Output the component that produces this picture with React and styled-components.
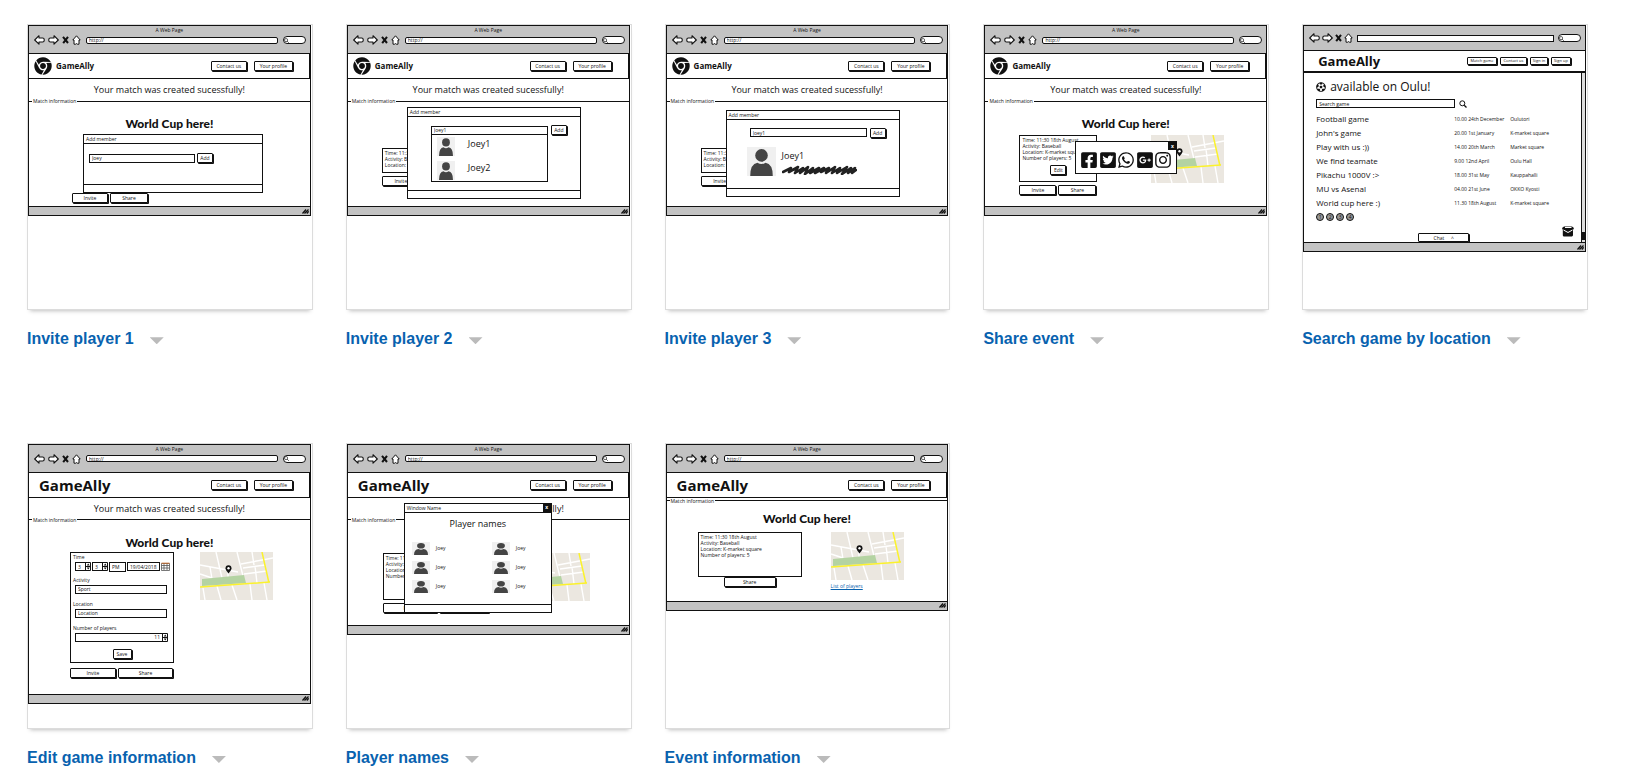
import React from "react";
import styled, { createGlobalStyle, css } from "styled-components";
import {
  FaChrome,
  FaFacebookSquare,
  FaTwitterSquare,
  FaWhatsapp,
  FaGooglePlusSquare,
  FaInstagram,
  FaFutbol,
} from "react-icons/fa";

const INK = "#111";

const GlobalStyle = createGlobalStyle`
  *, *::before, *::after { box-sizing: border-box; }
  body {
    margin: 0;
    background: #fff;
    font-family: "Liberation Sans", Arial, sans-serif;
  }
`;

/* ---------- gallery ---------- */

const Gallery = styled.main`
  display: grid;
  grid-template-columns: repeat(5, minmax(0, 1fr));
  gap: 77px 33px;
  padding: 24px 62px 0 27px;
`;

const Tile = styled.article`
  min-width: 0;
`;

const Thumb = styled.div`
  aspect-ratio: 1;
  padding-right: 1px;
  border: 1px solid #dcdcdc;
  background: #fff;
  box-shadow: 0 4px 4px -3px rgba(0, 0, 0, 0.25);
  overflow: hidden;
`;

const Caption = styled.div`
  display: flex;
  align-items: center;
  gap: 16px;
  height: 56px;
  padding-top: 2px;
`;

const TitleLink = styled.a`
  color: #0862af;
  font-size: 16px;
  font-weight: bold;
  line-height: 20px;
  text-decoration: none;
  white-space: nowrap;
`;

const MenuButton = styled.button`
  width: 14px;
  height: 7px;
  margin-top: 4px;
  padding: 0;
  border: 0;
  background: #bbb;
  clip-path: polygon(0 0, 100% 0, 50% 100%);
`;

/* ---------- wireframe browser ---------- */

const Frame = styled.div`
  position: relative;
  display: flex;
  flex-direction: column;
  border: 1px solid ${INK};
  background: #fff;
  color: ${INK};
  font-family: "Open Sans", "Noto Sans", sans-serif;
  font-size: 5px;
  line-height: 6px;
  white-space: nowrap;
`;

const Bar = styled.div`
  height: ${(p) => (p.$short ? 25 : 28)}px;
  padding-top: 1px;
  border-bottom: 1px solid ${INK};
  background: #c3c3c3;
`;

const BarTitle = styled.div`
  height: ${(p) => (p.$short ? 4 : 6)}px;
  text-align: center;
`;

const NavRow = styled.div`
  display: flex;
  align-items: center;
  gap: ${(p) => (p.$short ? 2 : 3)}px;
  height: 14px;
  padding: 0 4px 0 5px;
  svg { flex: none; display: block; }
`;

const field = css`
  min-width: 0;
  padding: 0 2px;
  border: 1px solid ${INK};
  border-radius: 0;
  background: #fff;
  color: ${INK};
  font: inherit;
  outline: 0;
`;

const UrlField = styled.input`
  ${field}
  flex: 1;
  height: 7px;
  margin-left: 2px;
  border-radius: ${(p) => (p.$square ? 0 : 2)}px;
`;

const SearchPill = styled.div`
  display: flex;
  align-items: center;
  width: 23px;
  height: 8px;
  margin-left: 2px;
  border: 1px solid ${INK};
  border-radius: 4px;
  background: #fff;
`;

const Head = styled.header`
  display: flex;
  align-items: center;
  gap: ${(p) => p.$gap || 7}px;
  height: ${(p) => (p.$short ? 22 : 25)}px;
  padding: 0 ${(p) => (p.$short ? 14 : 16)}px 0 ${(p) => p.$left}px;
  border-right: ${(p) => (p.$short ? 0 : 1)}px solid ${INK};
  border-bottom: ${(p) => (p.$short ? 2 : 1)}px solid ${INK};
  font-size: ${(p) => (p.$short ? 4 : 5)}px;
  svg { margin-right: -3px; }
`;

const Brand = styled.span`
  flex: 1;
  font-size: ${(p) => p.$size}px;
  font-weight: bold;
  line-height: 18px;
`;

const Key = styled.button`
  flex: none;
  width: ${(p) => p.$w}px;
  height: ${(p) => p.$h || 10}px;
  padding: 0;
  border: 1px solid ${INK};
  border-radius: 1px;
  box-shadow: 1px 1px 0 ${INK};
  background: #fff;
  color: ${INK};
  font: inherit;
  line-height: 6px;
`;

const Notice = styled.p`
  height: 19px;
  margin: 0;
  font-size: 9px;
  line-height: 21px;
  text-align: center;
`;

const Legend = styled.div`
  display: flex;
  align-items: center;
  gap: 1px;
  height: 6px;
  &::before, &::after { content: ""; height: 1px; background: ${INK}; }
  &::before { width: 3px; }
  &::after { flex: 1; }
`;

const Main = styled.section`
  min-height: ${(p) => p.$h}px;
  padding-top: ${(p) => (p.$top === undefined ? 12 : p.$top)}px;
`;

const Heading = styled.h2`
  margin: 0;
  font-family: Lato, "Open Sans", sans-serif;
  font-size: 12px;
  font-weight: 900;
  line-height: 16px;
  text-align: center;
`;

const Foot = styled.div`
  display: flex;
  align-items: center;
  justify-content: flex-end;
  height: 9px;
  padding-right: 1px;
  border-top: 1px solid ${INK};
  background: #c3c3c3;
`;

const Columns = styled.div`
  display: flex;
  align-items: flex-start;
  gap: ${(p) => p.$gap}px;
  padding: ${(p) => p.$top}px 0 0 ${(p) => p.$left}px;
`;

const Side = styled.div`
  width: ${(p) => p.$w}px;
`;

const Keys = styled.div`
  display: flex;
  justify-content: ${(p) => (p.$center ? "center" : "flex-start")};
  gap: 2px;
  margin-top: ${(p) => p.$top}px;
  padding-left: ${(p) => p.$left || 0}px;
`;

const Info = styled.div`
  display: flex;
  flex-direction: column;
  height: ${(p) => p.$h}px;
  padding: 1px 2px;
  border: 1px solid ${INK};
  overflow: hidden;
  button { align-self: center; margin-top: 4px; }
`;

const Panel = styled.div`
  display: flex;
  flex-direction: column;
  width: ${(p) => p.$w}px;
  height: ${(p) => p.$h}px;
  margin: 2px 0 0 54px;
  border: 1px solid ${INK};
  background: #fff;
`;

const Popup = styled(Panel)`
  position: absolute;
  top: ${(p) => p.$y}px;
  left: ${(p) => p.$x}px;
  margin: 0;
`;

const PanelTitle = styled.div`
  display: flex;
  justify-content: space-between;
  height: 9px;
  padding-left: 2px;
  border-bottom: ${(p) => (p.$plain ? 0 : 1)}px solid ${INK};
  line-height: 8px;
`;

const PanelBody = styled.div`
  flex: 1;
  padding: ${(p) => p.$pad};
`;

const PanelFoot = styled.div`
  height: 8px;
  border-top: 1px solid ${INK};
`;

const CloseKey = styled.button`
  width: 8px;
  height: 8px;
  margin-left: auto;
  padding: 0;
  border: 0;
  background: ${INK};
  color: #fff;
  font: inherit;
  font-weight: bold;
  line-height: 7px;
`;

const Line = styled.div`
  display: flex;
  align-items: center;
  gap: ${(p) => p.$gap || 3}px;
`;

const Field = styled.input`
  ${field}
  width: ${(p) => p.$w}px;
  height: 9px;
  text-align: ${(p) => p.$align || "left"};
`;

const Picker = styled.select`
  ${field}
  width: 17px;
  height: 10px;
  appearance: none;
`;

const Finder = styled.div`
  position: relative;
  width: 117px;
`;

const Options = styled.ul`
  position: absolute;
  top: 8px;
  left: 0;
  width: 100%;
  height: 48px;
  margin: 0;
  padding: 2px 0 0 5px;
  border: 1px solid ${INK};
  background: #fff;
  list-style: none;
`;

const Option = styled.li`
  display: flex;
  gap: 13px;
  height: 24px;
  font-size: 9px;
  line-height: 14px;
`;

const Result = styled.div`
  display: flex;
  gap: 6px;
  margin: 9px 0 0 20px;
  font-size: 9px;
  line-height: 18px;
  svg { display: block; }
`;

const Social = styled.div`
  display: flex;
  justify-content: space-between;
  padding: 0 4px;
`;

const PlayerHeading = styled.h3`
  margin: 0 0 8px;
  font-size: 9px;
  font-weight: normal;
  line-height: 20px;
  text-align: center;
`;

const Players = styled.ul`
  display: grid;
  grid-template-columns: 80px auto;
  row-gap: 6px;
  margin: 0;
  padding: 0 0 0 7px;
  list-style: none;
`;

const Player = styled.li`
  display: flex;
  align-items: center;
  gap: 6px;
`;

const MapLink = styled.a`
  display: block;
  margin-top: 3px;
  color: #0862af;
`;

const Form = styled.form`
  display: flex;
  flex-direction: column;
  width: 104px;
  height: 111px;
  padding: 1px 2px;
  border: 1px solid ${INK};
  button { align-self: center; }
`;

const Labelled = styled.label`
  display: flex;
  flex-direction: column;
  gap: 2px;
  margin-bottom: 7px;
  input { margin-left: 2px; }
`;

const TimeSet = styled.div`
  display: flex;
  align-items: center;
  gap: 1px;
  margin: 2px 0 5px 2px;
`;

const Amount = styled.span`
  display: flex;
  align-items: center;
`;

const Listing = styled.div`
  position: relative;
  height: 169px;
  padding: 5px 0 0 12px;
`;

const ListHeading = styled.h2`
  display: flex;
  align-items: center;
  gap: 4px;
  height: 18px;
  margin: 0 0 3px;
  font-size: 12px;
  font-weight: normal;
  line-height: 18px;
`;

const Games = styled.table`
  width: 250px;
  margin-top: 4px;
  border-collapse: collapse;
  table-layout: fixed;
  td, th { height: 14px; padding: 0; text-align: left; }
  th { width: 138px; font-size: 8px; font-weight: normal; line-height: 10px; }
  td:nth-child(2) { width: 56px; }
`;

const Pages = styled.nav`
  display: flex;
  gap: 2px;
  margin-top: 3px;
`;

const PageKey = styled.a`
  width: 8px;
  height: 8px;
  border: 1px solid ${INK};
  border-radius: 50%;
  background: #999;
  color: ${INK};
  text-align: center;
  text-decoration: none;
  line-height: 6px;
`;

const ChatKey = styled(Key)`
  position: absolute;
  bottom: 0;
  left: 114px;
  z-index: 1;
`;

const Scroll = styled.div`
  position: absolute;
  top: 0;
  right: 0;
  bottom: 0;
  display: flex;
  align-items: flex-end;
  width: 4px;
  border-left: 1px solid ${INK};
  background: #ddd;
  &::after { content: ""; width: 100%; height: 8px; margin-bottom: 2px; background: ${INK}; }
`;

const MailSpot = styled.div`
  position: absolute;
  right: 11px;
  bottom: 4px;
`;

/* ---------- drawings ---------- */

const Arrow = ({ flip }) => (
  <svg width="11" height="10" viewBox="0 0 11 10">
    <path
      d="M5 .7 .7 5 5 9.2V7H8.6Q10.2 7 10.2 5.6V4.4Q10.2 3 8.6 3H5Z"
      transform={flip ? "translate(11 0) scale(-1 1)" : undefined}
      fill="#fff" stroke={INK} strokeWidth="1.1" strokeLinejoin="round"
    />
  </svg>
);

const Stop = () => (
  <svg width="7" height="8" viewBox="0 0 7 8">
    <path d="M1 .8 6 7M6 .8 1.2 7.2" stroke={INK} strokeWidth="2" />
  </svg>
);

const Home = () => (
  <svg width="9" height="10" viewBox="0 0 9 10">
    <path d="M4.5.8.8 5H2V9.2H3.7Q4.5 8 5.3 9.2H7V5H8.2Z" fill="#fff" stroke={INK} strokeLinejoin="round" />
  </svg>
);

const Lens = ({ size }) => (
  <svg width={size} height={size} viewBox="0 0 8 8">
    <circle cx="3.3" cy="3.3" r="2.5" fill="none" stroke={INK} />
    <path d="M5.2 5.2 7.5 7.5" stroke={INK} strokeWidth="1.3" />
  </svg>
);

const Grip = () => (
  <svg width="7" height="5" viewBox="0 0 7 5">
    <path d="M.5 4.5 4 .5M2.5 4.5 6.5.5M4.8 4.5 6.7 2.3" stroke={INK} strokeWidth="1.3" />
  </svg>
);

const Person = ({ w, h }) => (
  <svg width={w} height={h} viewBox="0 0 18 18" preserveAspectRatio="none">
    <path d="M0 0H18V18H0Z" fill="#f0f0f0" />
    <circle cx="9" cy="5.2" r="3.9" fill="#444" />
    <path d="M2 18Q2 10.500 6.500 9.800Q9 11.400 11.500 9.800Q16 10.500 16 18Z" fill="#444" />
  </svg>
);

const Scribble = () => (
  <svg width="75" height="10" viewBox="0 0 75 10">
    <path
      d="M1 7 9 3 7 7 16 2 13 8 21 3 18 8 26 2 23 9 31 3 28 8 37 3 33 8 42 3 39 7 47 3 44 8 53 2 50 8 58 3 55 8 65 2 60 9 69 3 66 8 73 3 70 8 74 5"
      fill="none" stroke="#222" strokeWidth="2.6" strokeLinejoin="round" strokeLinecap="round"
    />
  </svg>
);

const MapSvg = styled.svg`
  display: block;
  flex: none;
`;

const StreetMap = () => (
  <MapSvg width="73" height="48" viewBox="0 0 73 48">
    <path d="M0 0H73V48H0Z" fill="#ebe7e0" />
    <path
      d="M16 0 22 26M37 0 45 32M0 13 38 20M41 12 73 6M43 16 65 13M44 22 67 19M0 22 12 26M10 15 12 27M28 18V26M52 0 54 13M55 14 57 31M17 34 21 48M32 33 37 48M50 32 52 48M64 31 67 48M3 36 5 48"
      fill="none" stroke="#fff" strokeWidth="1.4"
    />
    <path d="M2 27 44 23 46 31 2 34Z" fill="#b4d3a2" />
    <path d="M0 35 70 30M62 0 69 31" fill="none" stroke="#fbf22c" strokeWidth="1.5" />
    <path d="M28.500 21.500Q25.500 18 25.500 16.300A3 3 0 0 1 31.500 16.300Q31.500 18 28.500 21.500Z" fill={INK} />
    <circle cx="28.500" cy="16.300" r="1.200" fill="#fff" />
  </MapSvg>
);

const Stepper = () => (
  <svg width="5" height="9" viewBox="0 0 5 9">
    <path d="M0 .5H4.500V8.500H0M0 4.500H4.500" fill="#fff" stroke={INK} />
    <path d="M.8 3.500H3.700L2.200 1.500ZM.8 5.500H3.700L2.200 7.500Z" fill={INK} />
  </svg>
);

const Calendar = () => (
  <svg width="9" height="9" viewBox="0 0 9 9">
    <path d="M.5 1.500H8.500V8.500H.5ZM.5 3.500H8.500M3 1V8M6 1V8M.5 6H8.500" fill="#fff" stroke="#555" strokeWidth=".8" />
    <path d="M.5 1.200H8.500" stroke="#c66a2b" />
  </svg>
);

const Mail = () => (
  <svg width="12" height="11" viewBox="0 0 12 11">
    <path d="M0 2 2 .5H10L12 2 11 4V9.500L10 10.500H1.500L.8 9.500V4Z" fill={INK} />
    <path d="M1.500 4 6 6.500 10.500 4M3 1.500H9.500" fill="none" stroke="#fff" />
  </svg>
);

/* ---------- wireframe parts ---------- */

const Chrome = ({ short }) => (
  <Bar $short={short}>
    <BarTitle $short={short}>{short ? "" : "A Web Page"}</BarTitle>
    <NavRow $short={short}>
      <Arrow />
      <Arrow flip />
      <Stop />
      <Home />
      <UrlField aria-label="Address" $square={short} defaultValue={short ? "" : "http://"} />
      <SearchPill><Lens size={5} /></SearchPill>
    </NavRow>
  </Bar>
);

const Top = ({ logo }) => (
  <Head $left={logo ? 5 : 10}>
    {logo && <FaChrome size={18} color={INK} />}
    <Brand $size={logo ? 8 : 15}>GameAlly</Brand>
    <Key $w={36}>Contact us</Key>
    <Key $w={39}>Your profile</Key>
  </Head>
);

const Page = ({ logo, notice = true, children }) => (
  <Frame>
    <Chrome />
    <Top logo={logo} />
    {notice && <Notice>Your match was created sucessfully!</Notice>}
    <Legend>Match information</Legend>
    {children}
    <Foot><Grip /></Foot>
  </Frame>
);

const Details = ({ count = 4 }) =>
  [
    "Time: 11:30 18th August",
    "Activity: Baseball",
    "Location: K-market square",
    "Number of players: 5",
  ].slice(0, count).map((text) => <span key={text}>{text}</span>);

const Covered = () => (
  <Main $h={102} $top={44}>
    <Columns $top={0} $left={34}>
      <Side $w={78}>
        <Info $h={25}><Details count={3} /></Info>
        <Keys $top={3}><Key $w={38}>Invite</Key></Keys>
      </Side>
    </Columns>
  </Main>
);

/* ---------- the eight wireframes ---------- */

const InviteOne = () => (
  <Page logo>
    <Main $h={102}>
      <Heading>World Cup here!</Heading>
      <Panel $w={180} $h={59}>
        <PanelTitle>Add member</PanelTitle>
        <PanelBody $pad="9px 5px">
          <Line $gap={2}>
            <Field $w={106} aria-label="Member" defaultValue="Joey" />
            <Key $w={16}>Add</Key>
          </Line>
        </PanelBody>
        <PanelFoot />
      </Panel>
      <Keys $top={0} $left={43}>
        <Key $w={36}>Invite</Key>
        <Key $w={38}>Share</Key>
      </Keys>
    </Main>
  </Page>
);

const InviteTwo = () => (
  <Page logo>
    <Covered />
    <Popup $x={59} $y={81} $w={174} $h={92}>
      <PanelTitle>Add member</PanelTitle>
      <PanelBody $pad="8px 23px">
        <Line>
          <Finder>
            <Field $w={117} aria-label="Find member" defaultValue="Joey1" />
            <Options>
              <Option><Person w={18} h={19} />Joey1</Option>
              <Option><Person w={18} h={19} />Joey2</Option>
            </Options>
          </Finder>
          <Key $w={16}>Add</Key>
        </Line>
      </PanelBody>
      <PanelFoot />
    </Popup>
  </Page>
);

const InviteThree = () => (
  <Page logo>
    <Covered />
    <Popup $x={59} $y={84} $w={174} $h={87}>
      <PanelTitle>Add member</PanelTitle>
      <PanelBody $pad="0">
        <Columns $top={8} $left={23} $gap={3}>
          <Field $w={117} aria-label="Selected member" defaultValue="Joey1" />
          <Key $w={16}>Add</Key>
        </Columns>
        <Result>
          <Person w={29} h={29} />
          <div>Joey1<Scribble /></div>
        </Result>
      </PanelBody>
      <PanelFoot />
    </Popup>
  </Page>
);

const ShareEvent = () => (
  <Page logo>
    <Main $h={102}>
      <Heading>World Cup here!</Heading>
      <Columns $top={3} $left={34} $gap={54}>
        <Side $w={78}>
          <Info $h={47}>
            <Details />
            <Key $w={16}>Edit</Key>
          </Info>
          <Keys $top={3}>
            <Key $w={37}>Invite</Key>
            <Key $w={38}>Share</Key>
          </Keys>
        </Side>
        <StreetMap />
      </Columns>
    </Main>
    <Popup $x={90} $y={115} $w={102} $h={33}>
      <PanelTitle $plain><CloseKey aria-label="Close">x</CloseKey></PanelTitle>
      <Social>
        <FaFacebookSquare size={18} />
        <FaTwitterSquare size={18} />
        <FaWhatsapp size={18} />
        <FaGooglePlusSquare size={18} />
        <FaInstagram size={18} />
      </Social>
    </Popup>
  </Page>
);

const GAMES = [
  ["Football game", "10.00 24th December", "Oulutori"],
  ["John's game", "20.00 1st January", "K-market square"],
  ["Play with us :))", "14.00 20th March", "Market square"],
  ["We find teamate", "9.00 12nd April", "Oulu Hall"],
  ["Pikachu 1000V :>", "18.00 31st May", "Kauppahalli"],
  ["MU vs Asenal", "04.00 21st June", "OKKO Kyosti"],
  ["World cup here :)", "11.30 18th August", "K-market square"],
];

const SearchGame = () => (
  <Frame>
    <Chrome short />
    <Head $short $left={14} $gap={3}>
      <Brand $size={13}>GameAlly</Brand>
      <Key $w={30} $h={8}>Match game</Key>
      <Key $w={27} $h={8}>Contact us</Key>
      <Key $w={18} $h={8}>Sign in</Key>
      <Key $w={20} $h={8}>Sign up</Key>
    </Head>
    <Listing>
      <ListHeading><FaFutbol size={10} />available on Oulu!</ListHeading>
      <Line $gap={4}>
        <Field $w={139} aria-label="Search game" defaultValue="Search game" />
        <Lens size={8} />
      </Line>
      <Games>
        <tbody>
          {GAMES.map(([name, time, place]) => (
            <tr key={name}>
              <th scope="row">{name}</th>
              <td>{time}</td>
              <td>{place}</td>
            </tr>
          ))}
        </tbody>
      </Games>
      <Pages aria-label="Result pages">
        {[1, 2, 3, 4].map((n) => <PageKey key={n} href="#">{n}</PageKey>)}
      </Pages>
      <ChatKey $w={51} $h={9}>Chat &nbsp; &nbsp; ^</ChatKey>
      <MailSpot><Mail /></MailSpot>
      <Scroll />
    </Listing>
    <Foot><Grip /></Foot>
  </Frame>
);

const EditGame = () => (
  <Page>
    <Main $h={171}>
      <Heading>World Cup here!</Heading>
      <Columns $top={1} $left={41} $gap={26}>
        <Side $w={104}>
          <Form>
            <span>Time</span>
            <TimeSet>
              <Amount><Field $w={11} aria-label="Hour" defaultValue="3" /><Stepper /></Amount>
              <Amount><Field $w={11} aria-label="Minute" defaultValue="3" /><Stepper /></Amount>
              <Picker aria-label="Half of day"><option>PM</option></Picker>
              <Field $w={33} aria-label="Date" defaultValue="19/04/2018" />
              <Calendar />
            </TimeSet>
            <Labelled>Activity<Field $w={92} defaultValue="Sport" /></Labelled>
            <Labelled>Location<Field $w={92} defaultValue="Location" /></Labelled>
            <Labelled>
              Number of players
              <Amount><Field $w={88} $align="right" defaultValue="11" /><Stepper /></Amount>
            </Labelled>
            <Key type="button" $w={19}>Save</Key>
          </Form>
          <Keys $top={5}>
            <Key $w={46}>Invite</Key>
            <Key $w={55}>Share</Key>
          </Keys>
        </Side>
        <StreetMap />
      </Columns>
    </Main>
  </Page>
);

const PlayerNames = () => (
  <Page>
    <Main $h={102} $top={30}>
      <Columns $top={0} $left={35} $gap={29}>
        <Side $w={105}>
          <Info $h={47}><Details /></Info>
          <Keys $top={3}>
            <Key $w={54}>Invite</Key>
            <Key $w={50}>Share</Key>
          </Keys>
        </Side>
        <StreetMap />
      </Columns>
    </Main>
    <Popup $x={56} $y={58} $w={148} $h={110}>
      <PanelTitle>Window Name<CloseKey aria-label="Close">x</CloseKey></PanelTitle>
      <PanelBody $pad="1px 0">
        <PlayerHeading>Player names</PlayerHeading>
        <Players>
          {[1, 2, 3, 4, 5, 6].map((n) => (
            <Player key={n}><Person w={18} h={13} />Joey</Player>
          ))}
        </Players>
      </PanelBody>
      <PanelFoot />
    </Popup>
  </Page>
);

const EventInfo = () => (
  <Page notice={false}>
    <Main $h={97} $top={7}>
      <Heading>World Cup here!</Heading>
      <Columns $top={5} $left={31} $gap={29}>
        <Side $w={104}>
          <Info $h={45}><Details /></Info>
          <Keys $top={0} $center><Key $w={52}>Share</Key></Keys>
        </Side>
        <div>
          <StreetMap />
          <MapLink href="#">List of players</MapLink>
        </div>
      </Columns>
    </Main>
  </Page>
);

const TILES = [
  ["Invite player 1", InviteOne],
  ["Invite player 2", InviteTwo],
  ["Invite player 3", InviteThree],
  ["Share event", ShareEvent],
  ["Search game by location", SearchGame],
  ["Edit game information", EditGame],
  ["Player names", PlayerNames],
  ["Event information", EventInfo],
];

export default function App() {
  return (
    <>
      <GlobalStyle />
      <Gallery>
        {TILES.map(([title, Wireframe]) => (
          <Tile key={title}>
            <Thumb><Wireframe /></Thumb>
            <Caption>
              <TitleLink href="#">{title}</TitleLink>
              <MenuButton aria-label={`Options for ${title}`} />
            </Caption>
          </Tile>
        ))}
      </Gallery>
    </>
  );
}
